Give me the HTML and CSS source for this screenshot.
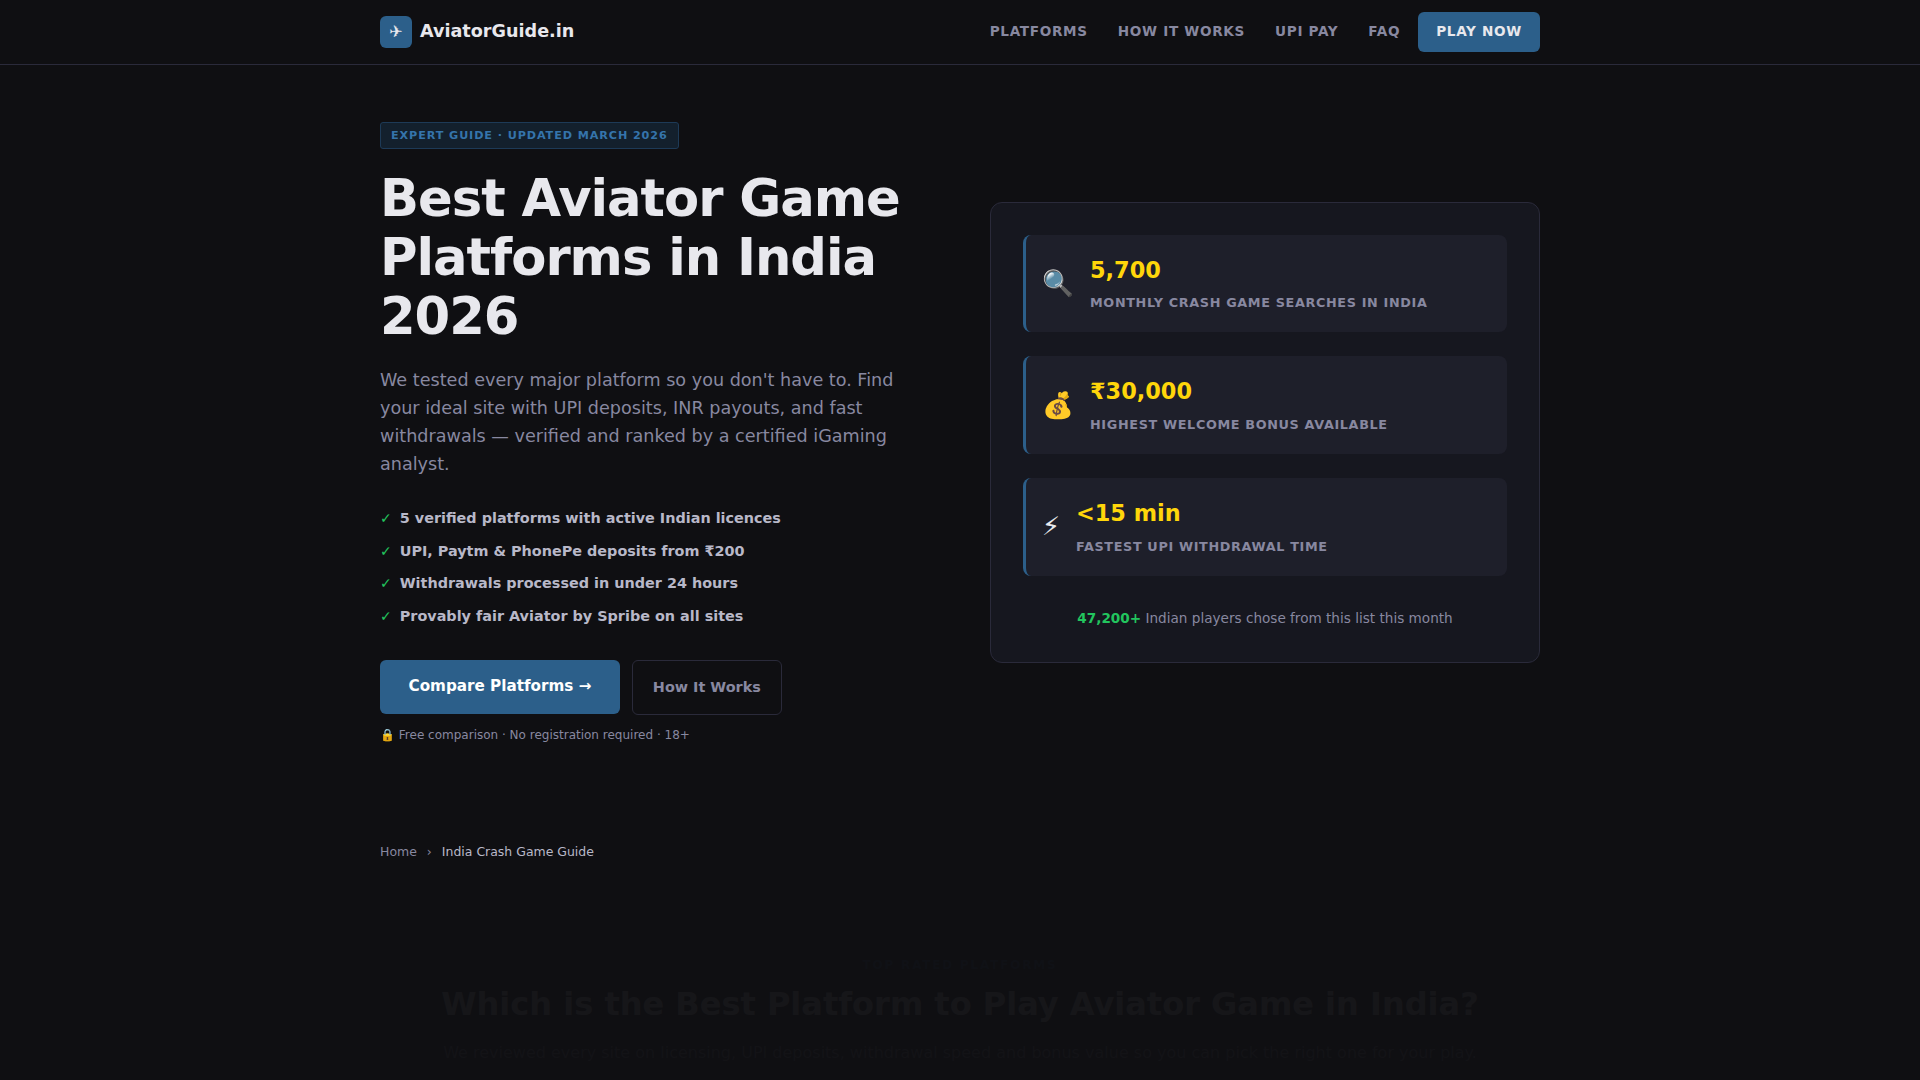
FILE: index.html
```html
<!DOCTYPE html>
<html>
<head>
    <title>AviatorGuide.in</title>
    <link rel="stylesheet" href="styles.css">
</head>
<body>
    <header class="site-header">
        <div class="container header-row">
            <a class="logo" href="#"><span class="logo-icon">✈</span><span class="logo-text">AviatorGuide.in</span></a>
            <nav class="nav">
                <a href="#">Platforms</a>
                <a href="#">How It Works</a>
                <a href="#">UPI Pay</a>
                <a href="#">FAQ</a>
                <a class="nav-cta" href="#">Play Now</a>
            </nav>
        </div>
    </header>

    <section class="hero">
        <div class="container hero-grid">
            <div class="hero-copy">
                <span class="badge">Expert Guide · Updated March 2026</span>
                <h1>Best Aviator Game Platforms in India 2026</h1>
                <p class="lead">We tested every major platform so you don't have to. Find your ideal site with UPI deposits, INR payouts, and fast withdrawals — verified and ranked by a certified iGaming analyst.</p>
                <ul class="checks">
                    <li>5 verified platforms with active Indian licences</li>
                    <li>UPI, Paytm &amp; PhonePe deposits from ₹200</li>
                    <li>Withdrawals processed in under 24 hours</li>
                    <li>Provably fair Aviator by Spribe on all sites</li>
                </ul>
                <div class="hero-buttons">
                    <a class="btn btn-primary" href="#">Compare Platforms →</a>
                    <a class="btn btn-outline" href="#">How It Works</a>
                </div>
                <p class="hero-note">🔒 Free comparison · No registration required · 18+</p>
            </div>
            <div class="stat-card">
                <div class="stat">
                    <span class="stat-icon">🔍</span>
                    <div>
                        <div class="stat-value">5,700</div>
                        <div class="stat-label">Monthly crash game searches in India</div>
                    </div>
                </div>
                <div class="stat">
                    <span class="stat-icon">💰</span>
                    <div>
                        <div class="stat-value">₹30,000</div>
                        <div class="stat-label">Highest welcome bonus available</div>
                    </div>
                </div>
                <div class="stat">
                    <span class="stat-icon">⚡</span>
                    <div>
                        <div class="stat-value">&lt;15 min</div>
                        <div class="stat-label">Fastest UPI withdrawal time</div>
                    </div>
                </div>
                <p class="stat-note"><strong>47,200+</strong> Indian players chose from this list this month</p>
            </div>
        </div>
    </section>

    <div class="container breadcrumb">
        <a href="#">Home</a>
        <span class="sep">›</span>
        <span class="current">India Crash Game Guide</span>
    </div>

    <!-- still fading in when the page is photographed -->
    <section class="platforms fade-in">
        <div class="container">
            <div class="eyebrow">Top Rated Platforms</div>
            <h2>Which is the Best Platform to Play Aviator Game in India?</h2>
            <p>We reviewed every site on licensing, UPI deposits, withdrawal speed and bonus value so you can pick the right one for your play.</p>
        </div>
    </section>
</body>
</html>
```

FILE: styles.css
```css
* { box-sizing: border-box; margin: 0; padding: 0; }
html, body { height: 1080px; overflow: hidden; }
body { background: #0f0f12; color: #e8e8ed; font-family: "DejaVu Sans", sans-serif; line-height: 1.6; }
a { color: inherit; text-decoration: none; }
.container { width: 1160px; margin: 0 auto; }

.site-header { height: 65px; border-bottom: 1px solid #2a2a3a; }
.header-row { height: 64px; display: flex; align-items: center; justify-content: space-between; }
.logo { display: flex; align-items: center; gap: 8px; font-size: 17.6px; font-weight: 700; }
.logo-text { padding-bottom: 2px; }
.logo-icon { width: 32px; height: 32px; border-radius: 6px; background: #2c5f8a; display: flex; align-items: center; justify-content: center; font-size: 16px; font-weight: 400; }
.nav { display: flex; align-items: center; gap: 30px; font-size: 13.6px; font-weight: 600; letter-spacing: 0.68px; text-transform: uppercase; color: #8888a0; }
.nav-cta { margin-left: -12px; padding: 9px 18px; border-radius: 6px; background: #2c5f8a; color: #e8e8ed; }

.hero { padding: 57px 0 0; }
.hero-grid { display: grid; grid-template-columns: 1fr 1fr; gap: 60px; align-items: center; }
.badge { display: inline-block; padding: 4px 10px; border: 1px solid #1d3a57; border-radius: 3px; background: #13202d; color: #3574ab; font-size: 11.2px; line-height: 17px; font-weight: 700; letter-spacing: 0.9px; text-transform: uppercase; vertical-align: top; }
h1 { margin: 20px 0 20px; font-size: 51.2px; line-height: 1.15; font-weight: 700; letter-spacing: -1.02px; }
.lead { max-width: 520px; margin-bottom: 29px; color: #8888a0; font-size: 17.6px; line-height: 1.6; }
.checks { list-style: none; margin-bottom: 32px; }
.checks li { display: flex; gap: 8px; font-size: 14.4px; font-weight: 600; color: #b8b8c8; margin-bottom: 9.6px; }
.checks li::before { content: "✓"; color: #22c55e; font-weight: 400; font-size: 14px; }
.hero-buttons { display: flex; gap: 12px; align-items: flex-start; }
.btn { display: block; border-radius: 6px; font-weight: 700; }
.btn-primary { padding: 14px 28.5px 16px; background: #2c5f8a; color: #fff; font-size: 15.2px; }
.btn-outline { padding: 15px 20px; border: 1px solid #2a2a3a; color: #8888a0; font-size: 14.4px; }
.hero-note { margin-top: 11px; font-size: 12px; color: #8888a0; }

.stat-card { margin-bottom: 3px; padding: 32px; border: 1px solid #2a2a3a; border-radius: 12px; background: #16171f; }
.stat { display: flex; align-items: center; gap: 16px; margin-bottom: 24.5px; padding: 18px 16px; border-left: 3px solid #2c5f8a; border-radius: 8px; background: #1e1f2a; }
.stat-icon { font-size: 25.6px; }
.stat-value { font-size: 22.4px; font-weight: 700; color: #ffd60a; margin-bottom: 5px; }
.stat-label { font-size: 12.8px; font-weight: 600; letter-spacing: 0.64px; color: #8888a0; text-transform: uppercase; }
.stat-note { padding-top: 8px; text-align: center; font-size: 13.6px; color: #8888a0; }
.stat-note strong { color: #22c55e; }

.breadcrumb { margin-top: 97px; display: flex; gap: 10px; font-size: 12.48px; color: #8888a0; }
.breadcrumb .current { color: #b8b8c8; }

.platforms { margin-top: 94px; text-align: center; }
.fade-in { opacity: 0.03; }
.eyebrow { color: #2c5f8a; font-size: 12px; font-weight: 700; letter-spacing: 1.8px; text-transform: uppercase; }
.platforms h2 { margin: 3px 0 10px; font-size: 32px; font-weight: 700; }
.platforms p { font-size: 16px; color: #8888a0; }
```
